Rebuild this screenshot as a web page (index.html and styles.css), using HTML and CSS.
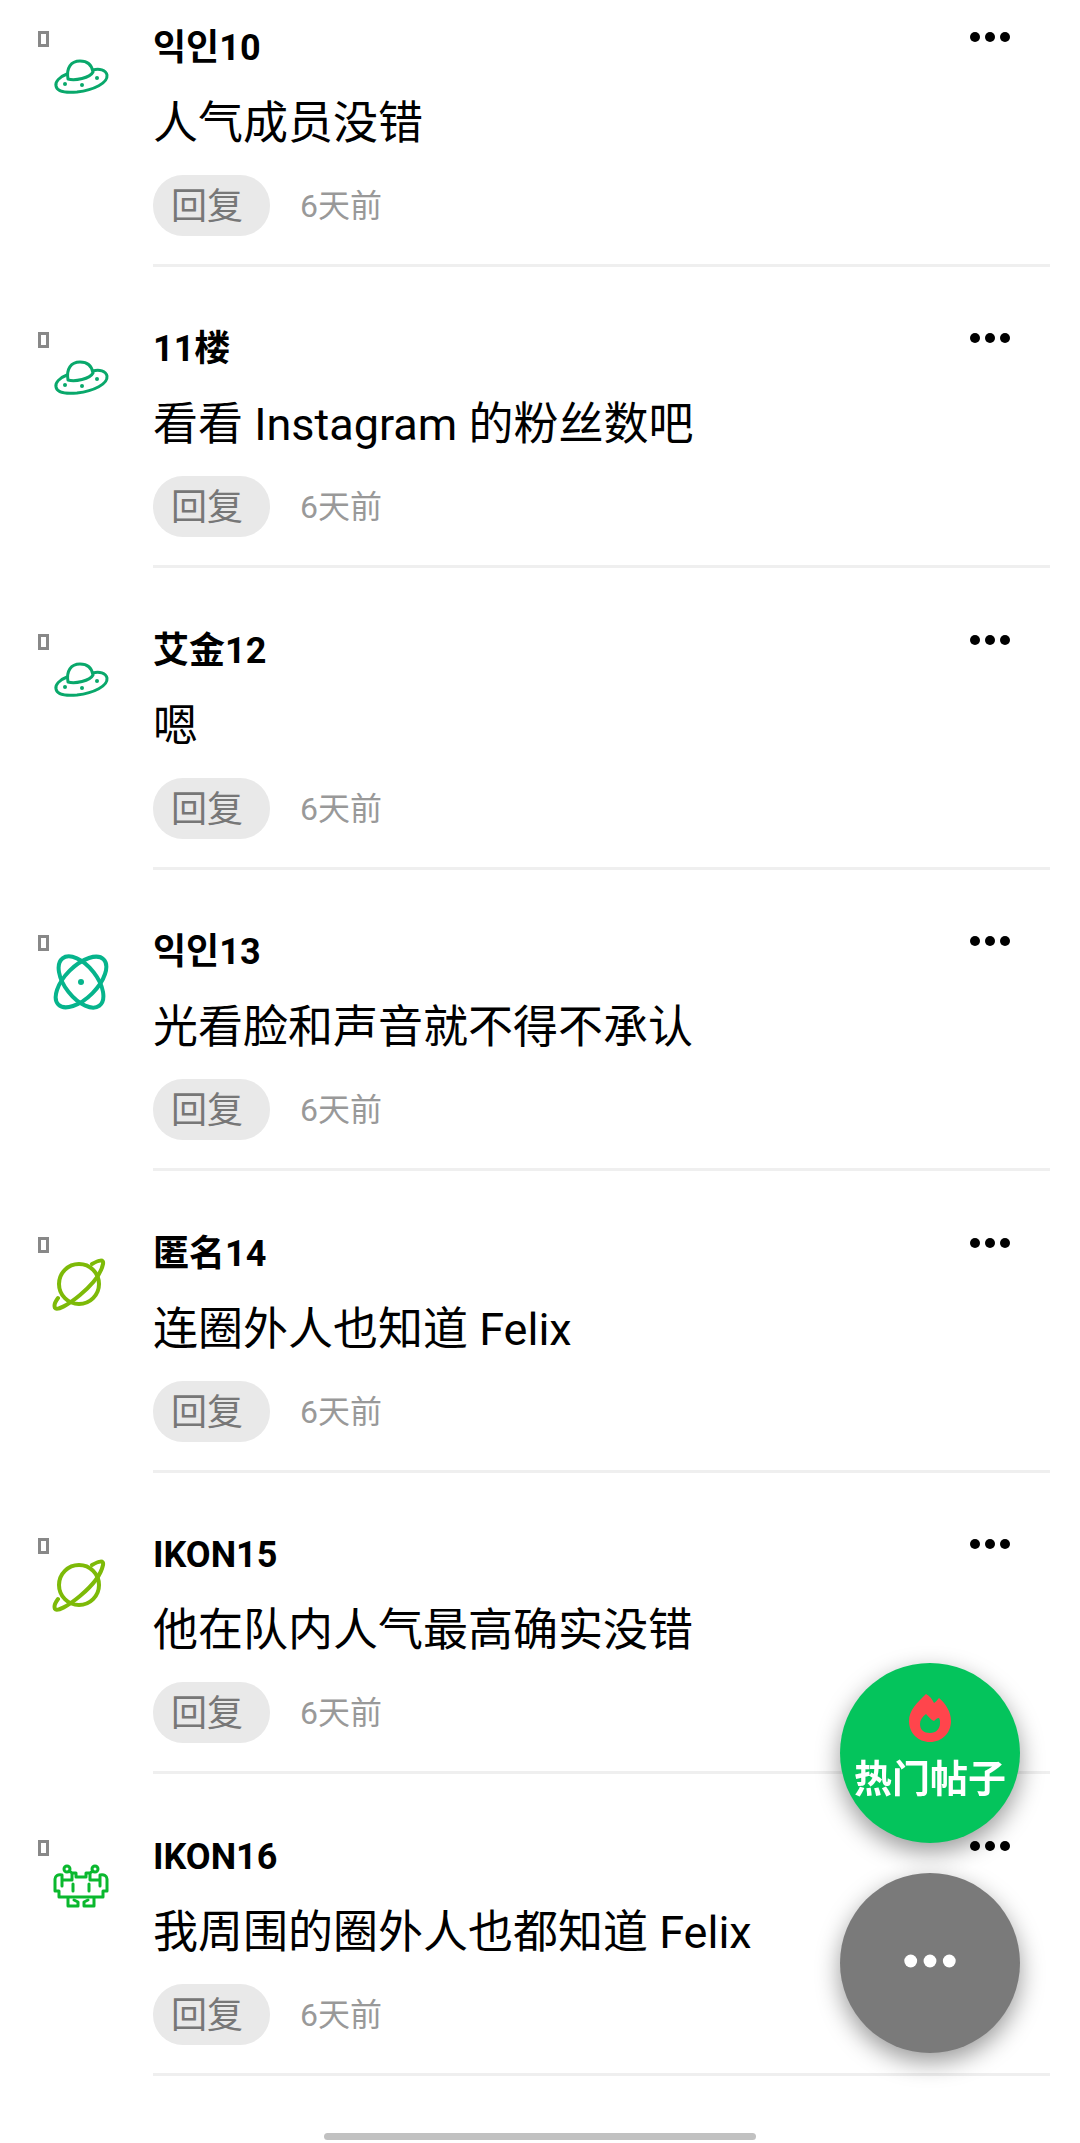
FILE: index.html
```html
<!DOCTYPE html>
<html lang="zh-CN">
<head>
  <meta charset="UTF-8">
  <meta name="viewport" content="width=device-width, initial-scale=1.0">
  <title>评论</title>
  <link rel="stylesheet" href="styles.css">
</head>
<body>
  <!-- Shared icons -->
  <svg class="sprite" aria-hidden="true">
    <symbol id="icon-ufo" viewBox="0 0 60 60">
      <path d="M16 27C8 30 4 35 5 39c1 6 10 7 21 6 17-2 31-9 30-17-1-5-8-7-14-5"></path>
      <path d="M17 32c-2-11 3-18 12-18 8 0 12 5 13 11-3 6-18 9-25 7z"></path>
      <circle class="fill" cx="14" cy="37" r="2"></circle>
      <circle class="fill" cx="31" cy="38" r="2"></circle>
      <circle class="fill" cx="46" cy="31" r="2"></circle>
    </symbol>
    <symbol id="icon-atom" viewBox="0 0 60 60">
      <ellipse cx="30" cy="31" rx="32" ry="16" transform="rotate(-45 30 31)"></ellipse>
      <ellipse cx="30" cy="31" rx="30" ry="16" transform="rotate(52 30 31)"></ellipse>
      <circle class="fill" cx="30" cy="31" r="3"></circle>
    </symbol>
    <symbol id="icon-planet" viewBox="0 0 60 60">
      <circle cx="28" cy="31" r="20"></circle>
      <path d="M41 11c7-4 12-5 11 0-2 10-11 21-23 31C17 52 6 58 4 55c-1-2 0-6 3-10"></path>
    </symbol>
    <symbol id="icon-invader" viewBox="0 0 60 60">
      <circle cx="16" cy="13" r="3"></circle>
      <circle cx="44" cy="13" r="3"></circle>
      <path d="M12 24h9v-7l-3-2M48 24h-9v-7l3-2M21 17h4v4h10v-4h4"></path>
      <path d="M11 30V19c-4-1-7 1-7 4v12h4v6h44v-6h4V23c0-3-3-5-7-4v11"></path>
      <path d="M22 28v7M38 28v7M17 42v8h10v-4l-4-2M43 42v8H33v-4l4-2"></path>
    </symbol>
    <symbol id="icon-more" viewBox="0 0 42 12">
      <circle cx="6" cy="6" r="5"></circle>
      <circle cx="21" cy="6" r="5"></circle>
      <circle cx="36" cy="6" r="5"></circle>
    </symbol>
  </svg>

  <ul class="comments">
    <li class="comment">
      <div class="avatar ufo"><span class="badge"></span><svg><use href="#icon-ufo"></use></svg></div>
      <div class="body">
        <div class="head">
          <h2 class="name" lang="ko">익인10</h2>
          <button class="more" aria-label="更多"><svg><use href="#icon-more"></use></svg></button>
        </div>
        <p class="text">人气成员没错</p>
        <div class="meta"><button class="reply">回复</button><time>6天前</time></div>
      </div>
    </li>
    <li class="comment">
      <div class="avatar ufo"><span class="badge"></span><svg><use href="#icon-ufo"></use></svg></div>
      <div class="body">
        <div class="head">
          <h2 class="name">11楼</h2>
          <button class="more" aria-label="更多"><svg><use href="#icon-more"></use></svg></button>
        </div>
        <p class="text">看看 Instagram 的粉丝数吧</p>
        <div class="meta"><button class="reply">回复</button><time>6天前</time></div>
      </div>
    </li>
    <li class="comment">
      <div class="avatar ufo"><span class="badge"></span><svg><use href="#icon-ufo"></use></svg></div>
      <div class="body">
        <div class="head">
          <h2 class="name">艾金12</h2>
          <button class="more" aria-label="更多"><svg><use href="#icon-more"></use></svg></button>
        </div>
        <p class="text">嗯</p>
        <div class="meta"><button class="reply">回复</button><time>6天前</time></div>
      </div>
    </li>
    <li class="comment">
      <div class="avatar atom"><span class="badge"></span><svg><use href="#icon-atom"></use></svg></div>
      <div class="body">
        <div class="head">
          <h2 class="name" lang="ko">익인13</h2>
          <button class="more" aria-label="更多"><svg><use href="#icon-more"></use></svg></button>
        </div>
        <p class="text">光看脸和声音就不得不承认</p>
        <div class="meta"><button class="reply">回复</button><time>6天前</time></div>
      </div>
    </li>
    <li class="comment">
      <div class="avatar planet"><span class="badge"></span><svg><use href="#icon-planet"></use></svg></div>
      <div class="body">
        <div class="head">
          <h2 class="name">匿名14</h2>
          <button class="more" aria-label="更多"><svg><use href="#icon-more"></use></svg></button>
        </div>
        <p class="text">连圈外人也知道 Felix</p>
        <div class="meta"><button class="reply">回复</button><time>6天前</time></div>
      </div>
    </li>
    <li class="comment">
      <div class="avatar planet"><span class="badge"></span><svg><use href="#icon-planet"></use></svg></div>
      <div class="body">
        <div class="head">
          <h2 class="name">IKON15</h2>
          <button class="more" aria-label="更多"><svg><use href="#icon-more"></use></svg></button>
        </div>
        <p class="text">他在队内人气最高确实没错</p>
        <div class="meta"><button class="reply">回复</button><time>6天前</time></div>
      </div>
    </li>
    <li class="comment">
      <div class="avatar invader"><span class="badge"></span><svg><use href="#icon-invader"></use></svg></div>
      <div class="body">
        <div class="head">
          <h2 class="name">IKON16</h2>
          <button class="more" aria-label="更多"><svg><use href="#icon-more"></use></svg></button>
        </div>
        <p class="text">我周围的圈外人也都知道 Felix</p>
        <div class="meta"><button class="reply">回复</button><time>6天前</time></div>
      </div>
    </li>
  </ul>

  <!-- Floating buttons -->
  <div class="fabs">
    <button class="fab fab-hot">
      <svg viewBox="0 0 44 50">
        <path fill-rule="evenodd" d="M18 1c4 2 6 5 8 9 2-1 3-3 5-5 7 6 12 14 12 23 0 12-9 21-21 21S1 40 1 28C1 17 9 10 18 1zM18 21c-4 3-6 6-6 10 0 6 4 9 10 9s10-4 10-10c0-2 0-3-1-5-2 0-3 1-5 3-3-1-5-4-8-7z"></path>
      </svg>
      <span>热门帖子</span>
    </button>
    <button class="fab fab-more" aria-label="菜单"><svg><use href="#icon-more"></use></svg></button>
  </div>

  <div class="home-bar"></div>
</body>
</html>
```
FILE: styles.css
```css
* {
  margin: 0;
  padding: 0;
  box-sizing: border-box;
}

body {
  font-family: Roboto, "Noto Sans CJK SC", sans-serif;
  background-color: #fff;
  color: #000;
}

button {
  border: none;
  background: none;
  font-family: inherit;
  cursor: pointer;
}

.sprite {
  position: absolute;
  width: 0;
  height: 0;
}

.comments {
  list-style: none;
  padding: 0 30px 66px;
}

.comment {
  display: flex;
  padding-top: 53px;
}

.comment:nth-child(even) {
  padding-top: 52px;
}

.comment:first-child {
  padding-top: 18px;
}

/* Avatar */
.avatar {
  flex: none;
  width: 123px;
  padding: 13px 0 0 8px;
  fill: none;
  stroke: currentColor;
  stroke-width: 4px;
  stroke-linecap: round;
  stroke-linejoin: round;
}

.avatar svg {
  display: block;
  width: 60px;
  height: 60px;
  margin-left: 13px;
}

.fill {
  fill: currentColor;
  stroke: none;
}

.badge {
  display: block;
  width: 11px;
  height: 16px;
  border: 3px solid #888;
}

.ufo {
  color: #09a86b;
  stroke-width: 3px;
}

.atom {
  color: #06b48c;
}

.planet {
  color: #7dba08;
}

.invader {
  color: #0ab82e;
  stroke-width: 3px;
}

/* Comment */
.body {
  flex: 1;
  border-bottom: 3px solid #efefef;
  padding-bottom: 28px;
}

.head {
  display: flex;
  justify-content: space-between;
  align-items: flex-start;
}

.name {
  font-size: 36px;
  font-weight: 700;
  line-height: 60px;
}

.name:lang(ko) {
  font-family: Roboto, "Noto Sans CJK KR", sans-serif;
}

.more {
  padding: 13px 39px 13px 0;
}

.more svg {
  display: block;
  width: 42px;
  height: 12px;
}

.text {
  font-size: 45px;
  line-height: 60px;
  padding: 16px 0 21px;
}

.meta {
  display: flex;
  align-items: center;
  gap: 30px;
}

.reply {
  height: 61px;
  padding: 0 27px 6px 18px;
  border-radius: 30px;
  background-color: #e9e9e9;
  color: #777;
  font-size: 36px;
}

time {
  padding-bottom: 6px;
  color: #999;
  font-size: 32px;
}

/* Floating buttons */
.fabs {
  position: fixed;
  right: 60px;
  bottom: 90px;
  display: flex;
  flex-direction: column;
  gap: 30px;
}

.fab {
  display: flex;
  flex-direction: column;
  align-items: center;
  justify-content: center;
  width: 180px;
  height: 180px;
  padding-bottom: 4px;
  border-radius: 50%;
  box-shadow: 0 9px 24px rgba(0, 0, 0, 0.4);
  color: #fff;
  fill: currentColor;
}

.fab-hot {
  gap: 6px;
  background-color: #04c45c;
  font-size: 38px;
  font-weight: 700;
  line-height: 60px;
  white-space: nowrap;
}

.fab-hot svg {
  width: 44px;
  height: 50px;
  fill: #ff454c;
}

.fab-more {
  background-color: #7a7a7a;
}

.fab-more svg {
  width: 54px;
  height: 16px;
}

.home-bar {
  position: fixed;
  bottom: 3px;
  left: 30%;
  width: 40%;
  height: 7px;
  border-radius: 4px;
  background-color: #c1c1c1;
}
```
